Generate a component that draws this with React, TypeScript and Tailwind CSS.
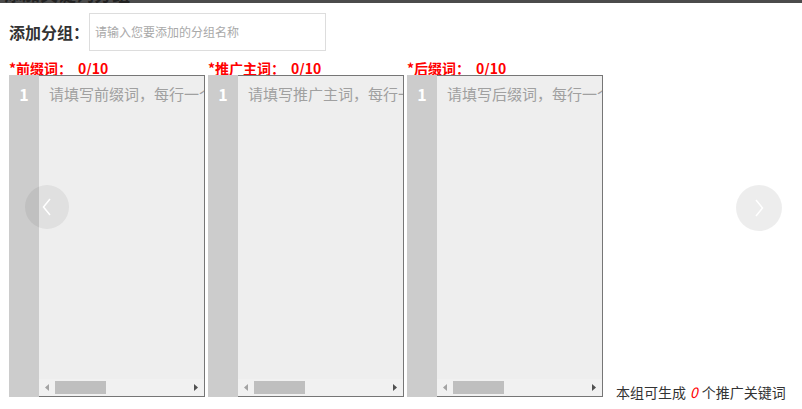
import React from "react";

const font = { fontFamily: '"Noto Sans CJK SC", "Noto Sans", sans-serif' };

function Column({ label, placeholder }: { label: string; placeholder: string }) {
  return (
    <div className="flex flex-col w-[196px]">
      <div className="h-[14px] leading-[14px] text-[14px] font-bold text-[#ff0000] whitespace-nowrap">
        *{label}：<span className="ml-[6px]">0/10</span>
      </div>
      <div className="flex h-[322px]">
        <div className="w-[30px] bg-[#cccccc] text-white font-bold text-[16px] leading-[20px] pt-[9px] text-center">
          1
        </div>
        <div className="w-[166px] flex flex-col bg-[#eeeeee] border-t border-r border-b border-[#767676]">
          <div className="flex-1 overflow-hidden pl-[10px] pt-[8px] text-[15px] leading-[20px] text-[#a0a0a0] whitespace-nowrap">
            {placeholder}
          </div>
          <div className="h-[17px] bg-[#f1f1f1] flex items-center">
            <div className="w-[16px] h-full flex items-center justify-center">
              <svg width="4" height="7" viewBox="0 0 4 7">
                <polygon points="4,0 4,7 0,3.5" fill="#a3a3a3" />
              </svg>
            </div>
            <div className="w-[51px] h-[13px] bg-[#bfbfbf]" />
            <div className="flex-1" />
            <div className="w-[16px] h-full flex items-center justify-center">
              <svg width="4" height="7" viewBox="0 0 4 7">
                <polygon points="0,0 0,7 4,3.5" fill="#505050" />
              </svg>
            </div>
          </div>
        </div>
      </div>
    </div>
  );
}

export default function App() {
  return (
    <div className="relative w-[802px] h-[409px] bg-white overflow-hidden" style={font}>
      <div className="h-[3px] bg-[#4b4b4b] overflow-hidden">
        <div className="-mt-[16px] pl-[4px] text-[18px] leading-[18px] font-bold text-[#222] whitespace-nowrap">
          添加关键词分组
        </div>
      </div>
      <div className="flex items-center pl-[9px] mt-[10px] h-[38px]">
        <span className="w-[80px] text-[16px] font-bold text-[#333] leading-[20px] whitespace-nowrap">添加分组：</span>
        <div className="w-[237px] h-[38px] border border-[#dddddd] pl-[5px] flex items-center text-[12px] text-[#a9a9a9] whitespace-nowrap">
          请输入您要添加的分组名称
        </div>
      </div>
      <div className="flex pl-[9px] mt-[10px] gap-[3px]">
        <Column label="前缀词" placeholder="请填写前缀词，每行一个前缀词" />
        <Column label="推广主词" placeholder="请填写推广主词，每行一个推广主词" />
        <Column label="后缀词" placeholder="请填写后缀词，每行一个后缀词" />
        <div className="self-end ml-[10px] -mb-[5px] text-[14px] leading-[20px] text-[#333] whitespace-nowrap">
          本组可生成<i className="mx-[4px] text-[#ff0000]">0</i>个推广关键词
        </div>
      </div>
      <div className="absolute left-[25px] top-[185px] w-[44px] h-[44px] rounded-full bg-black/[0.06] flex items-center justify-center">
        <svg width="10" height="18" viewBox="0 0 10 18">
          <polyline points="8,1 1.5,9 8,17" fill="none" stroke="#ffffff" strokeWidth="1.5" />
        </svg>
      </div>
      <div className="absolute left-[736px] top-[185px] w-[46px] h-[46px] rounded-full bg-black/[0.07] flex items-center justify-center">
        <svg width="10" height="18" viewBox="0 0 10 18">
          <polyline points="2,1 8.5,9 2,17" fill="none" stroke="#ffffff" strokeWidth="1.5" />
        </svg>
      </div>
    </div>
  );
}
